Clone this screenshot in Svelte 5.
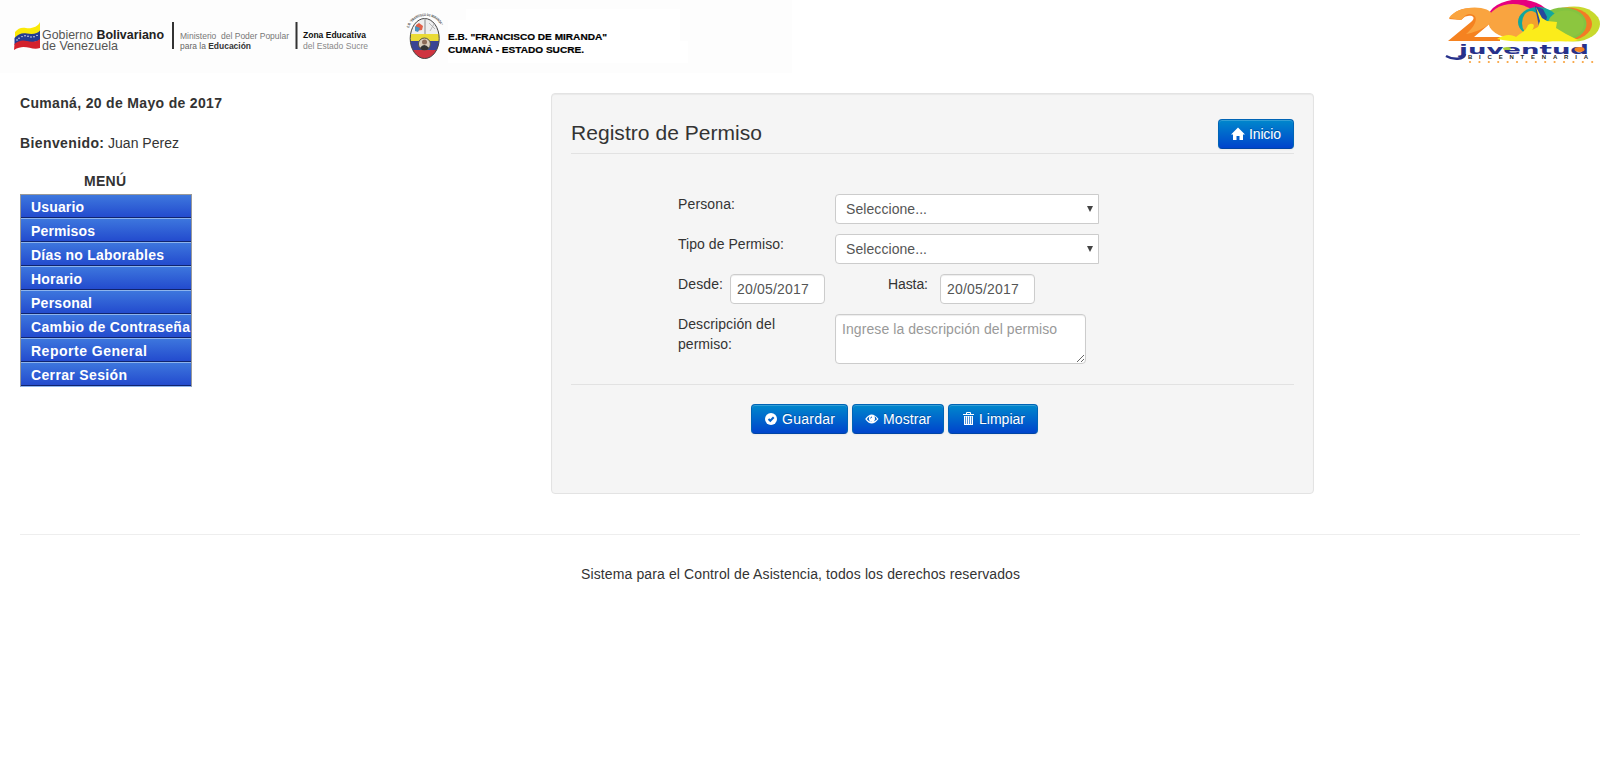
<script>
  const menu = [
    ['Usuario', 54], ['Permisos', 65], ['Días no Laborables', 134], ['Horario', 52],
    ['Personal', 62], ['Cambio de Contraseña', 160], ['Reporte General', 117], ['Cerrar Sesión', 97]
  ];
  const selects = [['persona', 'Persona:', 58], ['tipo', 'Tipo de Permiso:', 107]];
  const stars = [[17, 40], [19, 38.3], [22, 36.6], [25, 35.8], [28, 36.3], [31, 37], [34, 36.8], [37, 35.4]];
  const dots = Array.from({ length: 14 }, (_, i) => 1470 + i * 9.4);
</script>

{#snippet fit(text, width)}
  <svg class="fit" style="width:{width}px" height="20"><text x="0" y="15" textLength={width - 1}>{text}</text></svg>
{/snippet}

<header>
  <div class="banner">
    <svg width="792" height="73" viewBox="0 0 792 73">
      <rect width="792" height="73" fill="#fdfdfd" />
      <path d="M466 9H680V41H688V63H448V20H466Z" fill="#fff" />
      <g>
        <path d="M15 32C18 28 22 27 26 28C31 29 38 27 40 22V33C33 38 27 34 15 39Z" fill="#fbe908" />
        <path d="M14.5 38C18 34 22 32.5 27 33.5C33 34.5 38 33.5 40 30.5V40C31 45 25 38 14.5 45Z" fill="#243b91" />
        <path d="M14.5 44C18 41 22 39.5 27 41C33 42.5 37 41.5 40 39V48C31 51 25 43 14 50Z" fill="#d3202c" />
        {#each stars as [x, y]}
          <circle cx={x} cy={y} r=".7" fill="#fff" />
        {/each}
      </g>
      <g font-family="Liberation Sans" fill="#555">
        <text x="42" y="39" font-size="12.6" textLength="122" lengthAdjust="spacingAndGlyphs">Gobierno <tspan font-weight="bold" fill="#222">Bolivariano</tspan></text>
        <text x="42" y="50" font-size="12.6" textLength="76" lengthAdjust="spacingAndGlyphs">de Venezuela</text>
        <text x="180" y="38.5" font-size="9" fill="#777" textLength="109" lengthAdjust="spacingAndGlyphs">Ministerio&#160; del Poder Popular</text>
        <text x="180" y="49" font-size="9" fill="#666" textLength="71" lengthAdjust="spacingAndGlyphs">para la <tspan font-weight="bold" fill="#333">Educación</tspan></text>
        <text x="303" y="38" font-size="8.8" font-weight="bold" fill="#111" textLength="63" lengthAdjust="spacingAndGlyphs">Zona Educativa</text>
        <text x="303" y="49" font-size="8.8" fill="#888" textLength="65" lengthAdjust="spacingAndGlyphs">del Estado Sucre</text>
      </g>
      <path d="M172 22h2v27h-2zM295.5 22h2v27h-2z" fill="#333" />
      <g font-family="Liberation Sans" font-weight="bold" fill="#000" stroke="#000" stroke-width=".2">
        <text x="448" y="40.2" font-size="9.9" textLength="159" lengthAdjust="spacingAndGlyphs">E.B. "FRANCISCO DE MIRANDA"</text>
        <text x="448" y="52.7" font-size="9.9" textLength="136" lengthAdjust="spacingAndGlyphs">CUMANÁ - ESTADO SUCRE.</text>
      </g>
      <defs>
        <clipPath id="oval"><ellipse cx="424.7" cy="38.5" rx="14.5" ry="20" /></clipPath>
        <path id="arch" d="M409 28C413 13 436 11 442 28" />
      </defs>
      <g clip-path="url(#oval)">
        <path d="M409 17h32v17h-32z" fill="#eee" />
        <path d="M409 34h32v7h-32z" fill="#eadb36" />
        <path d="M409 41h32v9h-32z" fill="#394494" />
        <path d="M409 50h32v10h-32z" fill="#cf3440" />
      </g>
      <ellipse cx="424.7" cy="38.5" rx="14.5" ry="20" fill="none" stroke="#444" />
      <path d="M425 18V34" stroke="#888" />
      <path d="M416 25l3-2 4 3-1 4-6 1z" fill="#e06048" />
      <path d="M415 26l5 2-2 4-3-1z" fill="#4b91bd" />
      <path d="M429 23l6 6M434 24l-4 7" stroke="#aaa" stroke-width=".8" />
      <circle cx="424.4" cy="44" r="6" fill="#d9cdbb" stroke="#554" />
      <circle cx="424.5" cy="42" r="2.5" fill="#8b6b58" />
      <path d="M420 48q4-6 9 0l-2 2h-5z" fill="#333" />
      <text font-family="Liberation Sans" font-weight="bold" font-size="3.6" fill="#444"><textPath href="#arch" textLength="41" lengthAdjust="spacingAndGlyphs">E.B. "FRANCISCO DE MIRANDA"</textPath></text>
    </svg>
  </div>
  <svg class="bicentenary" width="155" height="65" viewBox="1445 0 155 65">
    <ellipse cx="1574" cy="24" rx="26" ry="17.5" fill="#c8d92d" />
    <ellipse cx="1567" cy="24" rx="25" ry="16.5" fill="#f37b25" />
    <ellipse cx="1563" cy="24" rx="23.5" ry="16.5" fill="#83c341" />
    <ellipse cx="1519" cy="18" rx="31" ry="18.5" fill="#e6007e" />
    <ellipse cx="1513" cy="21" rx="25" ry="17" fill="#f9a440" />
    <ellipse cx="1538" cy="22" rx="20" ry="15" fill="#12a79d" />
    <ellipse cx="1531" cy="23" rx="9" ry="12" fill="#f2a12e" />
    <ellipse cx="1566" cy="24" rx="18" ry="13.5" fill="#8cc63f" />
    <path d="M1449 19C1454 11 1462 8 1473 8C1491 8 1498 17 1486 27L1474 37H1500V41H1448L1471 22C1476 18 1473 15 1468 16C1464 16 1463 19 1461 20Z" fill="#f58220" />
    <path d="M1449 18C1457 5 1490 4 1493 16C1494 23 1482 31 1466 34C1478 24 1479 14 1469 14C1464 15 1464 18 1461 20Z" fill="#faa43f" />
    <path d="M1535 6L1543 9L1547 17L1545 25L1539 27Z" fill="#27489c" />
    <path d="M1497 39C1506 33 1513 35 1516 37C1521 33 1526 31 1528 25C1533 22 1536 25 1532 30L1538 27L1540 21L1536 7L1542 18L1547 21L1557 22L1556 28L1566 34L1578 40C1570 43 1555 40 1545 42C1529 40 1517 43 1497 39Z" fill="#fbec1b" />
    <text x="1459" y="53.5" font-family="DejaVu Sans" font-weight="bold" font-size="13" fill="#27318b" textLength="130" lengthAdjust="spacingAndGlyphs">juventud</text>
    <path d="M1465 54C1464 60 1453 60 1446 56" fill="none" stroke="#27318b" stroke-width="2.5" />
    <ellipse cx="1507" cy="48.5" rx="4" ry="1.5" fill="#a6ce39" />
    <ellipse cx="1579.5" cy="49.5" rx="5" ry="2.4" fill="#f58220" />
    <text x="1468" y="59.3" font-family="Liberation Sans" font-weight="bold" font-size="6" fill="#222" textLength="120">BICENTENARIA</text>
    {#each dots as x}<circle cx={x} cy="62" r="1.1" fill="#f9a440" />{/each}
  </svg>
</header>

<main>
  <aside>
    <p class="date"><b>{@render fit('Cumaná, 20 de Mayo de 2017', 203)}</b></p>
    <p class="hello"><b>{@render fit('Bienvenido:', 85)}</b> {@render fit('Juan Perez', 72)}</p>
    <h5>{@render fit('MENÚ', 43)}</h5>
    <nav>
      {#each menu as [name, width]}<a href="#top">{@render fit(name, width)}</a>{/each}
    </nav>
  </aside>

  <section class="well">
    <div class="legend">
      <h1><svg width="192" height="30"><text x="0" y="22" textLength="191">Registro de Permiso</text></svg></h1>
      <button class="home">
        <svg class="icon" viewBox="0 0 14 14"><path d="M7 .5L0 7.5H2V13H5.5V9H8.5V13H12V7.5H14Z" fill="#fff" /></svg>
        {@render fit('Inicio', 33)}
      </button>
    </div>
    <form onsubmit={(e) => e.preventDefault()}>
      {#each selects as [id, label, width]}
        <div class="row">
          <label for={id}>{@render fit(label, width)}</label>
          <button type="button" class="select" {id}>{@render fit('Seleccione...', 82)}<svg width="6" height="6"><path d="M0 0H6L3 6Z" fill="#444" /></svg></button>
        </div>
      {/each}
      <div class="row">
        <label class="from" for="desde">{@render fit('Desde:', 46)}</label>
        <input id="desde" value="20/05/2017" />
        <label class="to" for="hasta">{@render fit('Hasta:', 41)}</label>
        <input id="hasta" value="20/05/2017" />
      </div>
      <div class="row">
        <label for="desc">{@render fit('Descripción del', 98)}{@render fit('permiso:', 55)}</label>
        <textarea id="desc" placeholder="Ingrese la descripción del permiso"></textarea>
      </div>
    </form>
    <div class="actions">
      <button style="width:97px">
        <svg class="icon" viewBox="0 0 14 14"><circle cx="7" cy="7" r="6" fill="#fff" /><path d="M4.5 7L6.3 8.8L9.7 5.2" fill="none" stroke="#0864c9" stroke-width="2" /></svg>
        {@render fit('Guardar', 54)}
      </button>
      <button style="width:92px">
        <svg class="icon" viewBox="0 0 14 14"><path d="M.2 7Q6.5-2 13.5 7Q6.5 16 .2 7Z" fill="#fff" /><path d="M1.8 7.2Q6.5 13 12 7.2Q11 4.8 9.5 4.2Q11 9.5 7 9.8Q3 9.5 4.5 4.2Q2.5 5.5 1.8 7.2Z" fill="#0864c9" /><circle cx="6.9" cy="6.4" r="2.7" fill="#fff" /><path d="M5.6 6.4Q5.8 5 7 5" stroke="#0864c9" fill="none" /></svg>
        {@render fit('Mostrar', 49)}
      </button>
      <button style="width:90px">
        <svg class="icon" viewBox="0 0 14 14"><path d="M2 2.5H13M5.5 2V.5H9.5V2" fill="none" stroke="#fff" /><path d="M3 4H12V13H3Z" fill="#fff" /><path d="M4.5 4.5V12M6.5 4.5V12M8.5 4.5V12M10.5 4.5V12" stroke="#0864c9" stroke-width=".7" /></svg>
        {@render fit('Limpiar', 47)}
      </button>
    </div>
  </section>
</main>
<footer>{@render fit('Sistema para el Control de Asistencia, todos los derechos reservados', 440)}</footer>

<style>
  :global(body) { background: #fff; color: #333; font: 14px/20px 'Liberation Sans', Arial, sans-serif; }
  * { box-sizing: border-box; }
  header { display: flex; justify-content: space-between; height: 93px; }
  header svg, .fit { display: block; }
  .fit { fill: currentColor; overflow: visible; flex: none; }
  main { display: flex; padding: 0 20px; height: 441px; }
  aside { width: 531px; }
  p { margin: 0 0 20px; display: flex; gap: 3px; }
  h5 { margin: 0 0 3px; font-size: 14px; padding-left: 64px; }
  .hello { margin-bottom: 18px; }
  nav { width: 172px; border: 1px solid #999; border-bottom-color: #8db4ed; font-weight: bold; }
  nav a { display: block; height: 24px; padding: 3px 0 0 10px; color: #fff; text-decoration: none; background: linear-gradient(#3e78de, #234bce); border-bottom: 1px solid #10246e; box-shadow: inset 0 1px #8db4ed; }
  nav a:first-child { height: 23px; box-shadow: none; padding-top: 2px; }
  .well { width: 763px; height: 401px; padding: 19px; border: 1px solid #e3e3e3; border-radius: 4px; background: #f5f5f5; box-shadow: inset 0 1px 1px rgba(0,0,0,.05); }
  .legend { display: flex; justify-content: space-between; height: 41px; border-bottom: 1px solid #e2e2e2; }
  h1 { margin: 5px 0 0; font-size: 21px; font-weight: normal; }
  h1 svg { display: block; fill: #333; }
  button { font: inherit; display: flex; align-items: center; }
  .legend button, .actions button { height: 30px; color: #fff; border: 1px solid #0064b5; border-radius: 4px; border-bottom-color: #0044a5; background: linear-gradient(#0088cc, #0044cc); box-shadow: inset 0 1px rgba(255,255,255,.2), 0 1px 2px rgba(0,0,0,.05); padding: 0 12px; gap: 4px; text-shadow: 0 -1px rgba(0,0,0,.25); }
  .legend .home { margin-top: 6px; width: 76px; }
  .icon { width: 14px; height: 14px; flex: none; }
  form { padding: 40px 0 0 107px; height: 231px; border-bottom: 1px solid #e2e2e2; }
  .row { display: flex; align-items: flex-start; margin-bottom: 10px; }
  label { width: 157px; }
  label.from { width: 52px; }
  label.to { width: 52px; margin-left: 63px; }
  .select { width: 264px; height: 30px; border: 1px solid #ccc; border-radius: 4px 0 0 4px; background: #fff; color: #555; padding: 0 5px 0 10px; justify-content: space-between; }
  input, textarea { font: inherit; color: #555; border: 1px solid #ccc; border-radius: 4px; background: #fff; box-shadow: inset 0 1px 1px rgba(0,0,0,.075); padding: 4px 6px; margin: 0; }
  input { width: 95px; height: 30px; letter-spacing: .18px; }
  textarea { width: 251px; height: 50px; letter-spacing: .08px; overflow: auto; resize: both; }
  textarea::placeholder { color: #999; }
  .actions { display: flex; gap: 4px; padding: 19px 0 0 180px; }
  footer { margin: 0 20px; padding: 29px 0 0 1px; border-top: 1px solid #eee; display: flex; justify-content: center; }
</style>
